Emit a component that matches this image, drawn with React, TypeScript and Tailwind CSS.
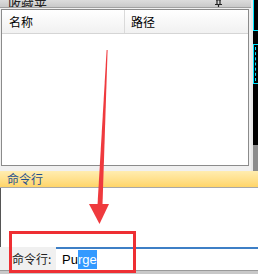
import React from 'react';

const cjk = { fontFamily: '"Noto Sans CJK SC", "Microsoft YaHei", sans-serif' };

function PinIcon() {
    return (
        <svg width="9" height="8" viewBox="0 0 9 8" className="block">
            <path d="M2 0h5M3 0v4M6 0v4M1 4.5h7M4.5 4.5V8" stroke="#222" strokeWidth="1.2" fill="none" />
        </svg>
    );
}

function SideStrip() {
    return (
        <div className="w-[7px] h-full flex flex-col bg-[#e8e8e8]">
            <div className="h-[145px] bg-black ml-[2px] relative">
                <div className="absolute left-0 top-0 w-[1px] h-[30px] bg-[#00e5ff]" />
                <div className="absolute left-0 top-[30px] w-full h-[1px] bg-[#00e5ff]" />
                <div className="absolute left-0 top-[44px] w-full h-[40px] border border-[#00e5ff] border-r-0" />
                <div className="absolute left-[2px] top-[47px] w-0 h-[34px] border-l border-dashed border-[#00e5ff]" />
            </div>
            <div className="flex-1 bg-[#8c8c8c] ml-[2px]" />
        </div>
    );
}

function Arrow() {
    return (
        <svg width="258" height="274" className="absolute left-0 top-0 pointer-events-none">
            <polygon points="106.6,50 107.6,50 102.5,205 97.5,205" fill="#ef3a3e" />
            <polygon points="89,204 109,204 99.5,224" fill="#ef3a3e" />
        </svg>
    );
}

export default function App() {
    return (
        <div className="relative w-[258px] h-[274px] overflow-hidden bg-[#f0f0f0] flex flex-col" style={cjk}>
            <div className="flex h-[171px]">
                <div className="flex-1 flex flex-col">
                    <div className="h-[8px] overflow-hidden bg-gradient-to-b from-[#dcdcdc] to-[#c9c9c9] border-b border-[#a0a0a0] flex items-end justify-between pl-[8px] pr-[28px]">
                        <span className="text-[13px] leading-[13px] text-[#222] -mb-[3px]">收藏夹</span>
                        <div className="-mb-[1px]"><PinIcon /></div>
                    </div>
                    <div className="ml-[1px] mr-[2px] mt-[1px] h-[157px] border border-[#8b8b8b] bg-white flex flex-col">
                        <div className="h-[24px] flex bg-gradient-to-b from-white to-[#f1f1f1] border-b border-[#d5d5d5] text-[12px] text-black">
                            <div className="w-[123px] border-r border-[#dadada] pl-[7px] flex items-center">名称</div>
                            <div className="flex-1 pl-[6px] flex items-center">路径</div>
                        </div>
                    </div>
                </div>
                <SideStrip />
            </div>
            <div className="h-[17px] bg-gradient-to-b from-[#ffedb0] to-[#ffd568] border-b border-[#a8a8a8] pl-[7px] flex items-center text-[12px] text-[#1d4f8e]">
                命令行
            </div>
            <div className="h-[59px] bg-white border-l border-[#555]" />
            <div className="h-[23px] flex bg-[#f0f0f0]">
                <div className="w-[56px] pl-[12px] flex items-center text-[12px] text-[#222]">命令行:</div>
                <div className="flex-1 bg-white border-t-2 border-[#3d7fc6] flex items-center pl-[6px] text-[13px] text-black" style={{ fontFamily: '"Liberation Sans", Arial, sans-serif' }}>
                    <span>Pu</span>
                    <span className="bg-[#3399ff] text-white">rge</span>
                </div>
            </div>
            <div className="flex-1 bg-[#c8c8c8] border-t border-[#9a9a9a]" />
            <div className="absolute left-[9px] top-[231px] w-[127px] h-[42px] border-[3px] border-[#ee2f33]" />
            <Arrow />
        </div>
    );
}
